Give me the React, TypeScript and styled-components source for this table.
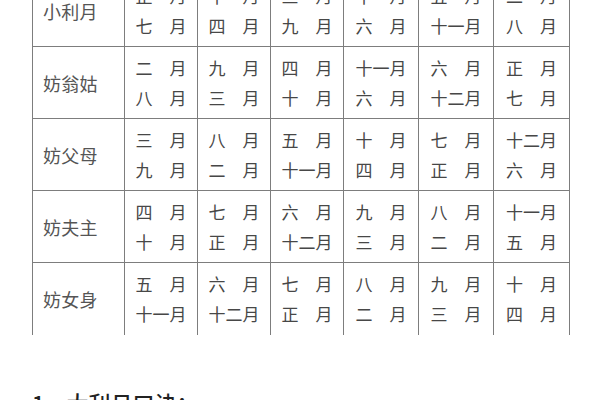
import React from "react";
import styled, { createGlobalStyle } from "styled-components";

const Global = createGlobalStyle`
  html, body { margin: 0; padding: 0; background: #ffffff; }
  body { font-family: "Noto Sans CJK SC", "Noto Sans", sans-serif; overflow: hidden; }
`;

const Page = styled.div`
  width: 600px;
  height: 400px;
  overflow: hidden;
  background: #ffffff;
`;

const Table = styled.table`
  border-collapse: collapse;
  table-layout: fixed;
  width: 537px;
  margin: -26px 0 0 32px;
`;

const Col = styled.col<{ $w: number }>`
  width: ${(p) => p.$w}px;
`;

const Row = styled.tr<{ $last?: boolean }>`
  height: 72px;
  & > td {
    border-bottom: ${(p) => (p.$last ? "none" : "1px solid #7d7d7d")};
  }
`;

const LabelCell = styled.td`
  box-sizing: border-box;
  padding: 0 0 0 10px;
  border-left: 1px solid #7d7d7d;
  border-right: 1px solid #7d7d7d;
  border-top: 1px solid #7d7d7d;
  font-size: 18px;
  color: #555;
  vertical-align: middle;
  text-align: left;
  letter-spacing: 0.3px;
`;

const MonthCell = styled.td`
  box-sizing: border-box;
  padding: 0;
  border-right: 1px solid #7d7d7d;
  border-top: 1px solid #7d7d7d;
  vertical-align: middle;
  text-align: center;
`;

const Line = styled.div`
  font-size: 17px;
  line-height: 30px;
  color: #474747;
  white-space: nowrap;
`;

const Heading = styled.div`
  margin: 51px 0 0 32px;
  font-size: 22px;
  line-height: 33px;
  font-weight: 500;
  color: #222;
  white-space: nowrap;
`;

const S = "\u3000";
const m = (n: string) => (n.length === 1 ? `${n}${S}月` : `${n}月`);

const widths = [92, 73, 73, 73, 75, 75, 76];

const rows: { label: string; cells: [string, string][] }[] = [
  {
    label: "小利月",
    cells: [
      ["正", "七"],
      ["十", "四"],
      ["三", "九"],
      ["十", "六"],
      ["五", "十一"],
      ["二", "八"],
    ],
  },
  {
    label: "妨翁姑",
    cells: [
      ["二", "八"],
      ["九", "三"],
      ["四", "十"],
      ["十一", "六"],
      ["六", "十二"],
      ["正", "七"],
    ],
  },
  {
    label: "妨父母",
    cells: [
      ["三", "九"],
      ["八", "二"],
      ["五", "十一"],
      ["十", "四"],
      ["七", "正"],
      ["十二", "六"],
    ],
  },
  {
    label: "妨夫主",
    cells: [
      ["四", "十"],
      ["七", "正"],
      ["六", "十二"],
      ["九", "三"],
      ["八", "二"],
      ["十一", "五"],
    ],
  },
  {
    label: "妨女身",
    cells: [
      ["五", "十一"],
      ["六", "十二"],
      ["七", "正"],
      ["八", "二"],
      ["九", "三"],
      ["十", "四"],
    ],
  },
];

export default function App() {
  return (
    <Page>
      <Global />
      <Table>
        <colgroup>
          {widths.map((w, i) => (
            <Col key={i} $w={w} />
          ))}
        </colgroup>
        <tbody>
          {rows.map((r, i) => (
            <Row key={r.label} $last={i === rows.length - 1}>
              <LabelCell>{r.label}</LabelCell>
              {r.cells.map(([a, b], j) => (
                <MonthCell key={j}>
                  <Line>{m(a)}</Line>
                  <Line>{m(b)}</Line>
                </MonthCell>
              ))}
            </Row>
          ))}
        </tbody>
      </Table>
      <Heading>1、大利月口诀：</Heading>
    </Page>
  );
}
